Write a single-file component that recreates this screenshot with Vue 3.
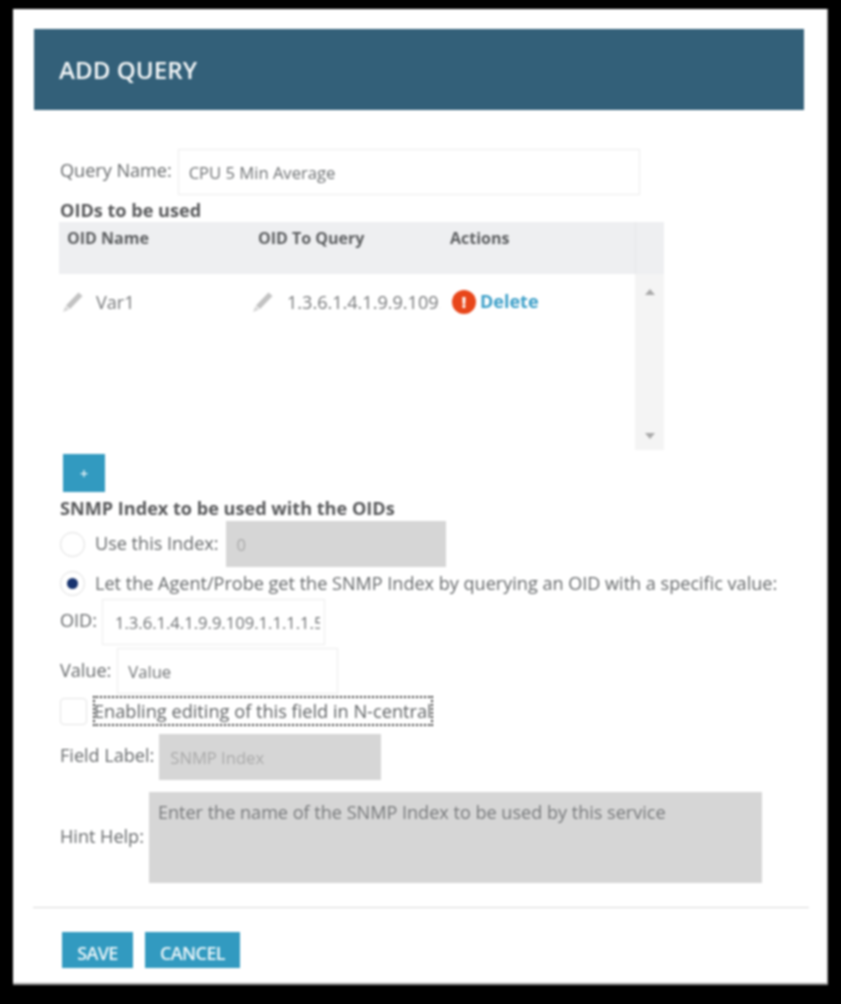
<template>
  <div class="page">
    <div class="panel">
      <header class="head">ADD QUERY</header>

      <div class="form">
        <div class="row nameRow">
          <span class="lbl">Query Name:</span>
          <div class="field nameField"><span class="fieldText">CPU 5 Min Average</span></div>
        </div>

        <h3 class="sub oidsSub">OIDs to be used</h3>
        <div class="table">
          <div class="tableMain">
            <div class="thead">
              <span class="colA">OID Name</span>
              <span class="colB">OID To Query</span>
              <span class="colC">Actions</span>
            </div>
            <div class="tbody">
              <div class="cell colA">
                <svg class="pencil" viewBox="0 0 22 22"><path d="M16.5 1.5l4 3.5L8 18l-4-3.5z" fill="#c2c2c2" /><path d="M3.4 15.3l3.7 3.3L1 21z" fill="#d4d4d4" /></svg>
                <span>{{ row.name }}</span>
              </div>
              <div class="cell colB">
                <svg class="pencil" viewBox="0 0 22 22"><path d="M16.5 1.5l4 3.5L8 18l-4-3.5z" fill="#c2c2c2" /><path d="M3.4 15.3l3.7 3.3L1 21z" fill="#d4d4d4" /></svg>
                <span class="oidText">{{ row.oid }}</span>
              </div>
              <div class="cell colC">
                <span class="warn">!</span>
                <a class="del">Delete</a>
              </div>
            </div>
          </div>
          <div class="scroll">
            <div class="scrollHead"></div>
            <div class="scrollTrack">
              <span class="arrUp"></span>
              <span class="arrDown"></span>
            </div>
          </div>
        </div>
        <button class="btn addBtn">+</button>

        <h3 class="sub snmpSub">SNMP Index to be used with the OIDs</h3>
        <div class="row useRow">
          <span class="radio"></span>
          <span class="lbl optText">Use this Index:</span>
          <div class="field off indexField"><span class="fieldText">0</span></div>
        </div>
        <div class="row letRow">
          <span class="radio on"></span>
          <span class="lbl optText">Let the Agent/Probe get the SNMP Index by querying an OID with a specific value:</span>
        </div>
        <div class="row oidRow">
          <span class="lbl">OID:</span>
          <div class="field oidField"><span class="fieldText">{{ row.oid }}</span></div>
        </div>
        <div class="row valueRow">
          <span class="lbl">Value:</span>
          <div class="field valueField"><span class="fieldText">Value</span></div>
        </div>
        <div class="row checkRow">
          <span class="check"></span>
          <span class="lbl focusText">Enabling editing of this field in N-central</span>
        </div>
        <div class="row labelRow">
          <span class="lbl">Field Label:</span>
          <div class="field off labelField"><span class="fieldText">SNMP Index</span></div>
        </div>
        <div class="row hintRow">
          <span class="lbl">Hint Help:</span>
          <div class="hintField">Enter the name of the SNMP Index to be used by this service</div>
        </div>
      </div>

      <div class="foot">
        <button class="btn saveBtn">SAVE</button>
        <button class="btn cancelBtn">CANCEL</button>
      </div>
    </div>
  </div>
</template>

<script setup>
const row = { name: "Var1", oid: "1.3.6.1.4.1.9.9.109.1.1.1.1.5" };
</script>

<style>
html, body { margin: 0; background: #000; }
</style>

<style scoped>
.page {
  width: 841px;
  height: 1004px;
  overflow: hidden;
  background: #000;
  padding: 9px 0 0 13px;
  box-sizing: border-box;
  font-family: "Open Sans", "Liberation Sans", sans-serif;
  font-size: 18.07px;
  color: #66696b;
}

.panel {
  width: 815px;
  height: 976px;
  box-sizing: border-box;
  background: #fff;
  padding: 20px 0 0 21px;
  box-shadow: inset -2px -3px 1px -1px #9a9a9a;
  filter: blur(0.9px);
}

.head {
  width: 770px;
  height: 81px;
  box-sizing: border-box;
  background: #336079;
  color: #f4f7f8;
  font-size: 24.2px;
  font-weight: 600;
  line-height: 81px;
  padding-left: 25px;
}

.form { padding: 39px 0 0 26px; }

.row { display: flex; align-items: center; }
.lbl { white-space: nowrap; }

.field {
  height: 46px;
  box-sizing: border-box;
  border: 1px solid #ececec;
  background: #fff;
  font-size: 16.6px;
  line-height: 44px;
  padding: 1px 10px 0;
  white-space: nowrap;
  color: #6f7274;
}
.fieldText { display: block; overflow: hidden; }
.field.off {
  background: #d6d6d6;
  border-color: #d6d6d6;
  color: #a9a9a9;
}

.nameRow { height: 46px; }
.nameRow .lbl { margin-top: -4px; }
.nameField { width: 462px; margin-left: 6px; }

.sub {
  margin: 0;
  font-size: 18.1px;
  font-weight: 700;
  color: #58595b;
  white-space: nowrap;
}
.oidsSub { height: 27px; line-height: 31px; }

.table {
  display: flex;
  width: 605px;
  height: 228px;
  margin-left: -1px;
}
.tableMain { flex: 1; min-width: 0; }
.thead {
  display: flex;
  height: 52px;
  background: #eeeff1;
  font-size: 16px;
  font-weight: 700;
  color: #5d5f61;
  line-height: 32px;
}
.thead span { padding-left: 8px; box-sizing: border-box; }
.colA { width: 191px; }
.colB { width: 192px; }
.colC { flex: 1; }
.tbody { display: flex; padding-top: 15px; }
.cell {
  display: flex;
  align-items: center;
  height: 26px;
  box-sizing: border-box;
  color: #77797b;
  overflow: hidden;
  white-space: nowrap;
}
.cell.colA { padding-left: 3px; }
.cell.colB { padding: 0 2px 0 2px; }
.cell.colC { padding-left: 10px; overflow: visible; }
.pencil { width: 22px; height: 22px; flex: none; margin-right: 12px; }
.cell.colB .pencil { margin-right: 13px; }
.oidText { overflow: hidden; }
.warn {
  width: 24px;
  height: 24px;
  flex: none;
  border-radius: 50%;
  background: #e8461a;
  color: #fff;
  font-size: 15px;
  font-weight: 800;
  line-height: 24px;
  text-align: center;
  margin-right: 4px;
}
.del {
  font-size: 18px;
  font-weight: 700;
  color: #3c9fc8;
  margin-top: -2px;
}

.scroll { width: 29px; flex: none; display: flex; flex-direction: column; }
.scrollHead { height: 52px; background: #eeeff1; border-left: 1px solid #e6e7e9; }
.scrollTrack {
  flex: 1;
  background: #f4f4f4;
  display: flex;
  flex-direction: column;
  justify-content: space-between;
  align-items: center;
  padding: 15px 0 11px;
}
.arrUp, .arrDown {
  width: 0;
  height: 0;
  border-left: 5px solid transparent;
  border-right: 5px solid transparent;
}
.arrUp { border-bottom: 6px solid #a9a9a9; }
.arrDown { border-top: 6px solid #a9a9a9; }

.btn {
  display: block;
  border: 0;
  padding: 0;
  background: #329ac0;
  color: #eef7fa;
  font-family: inherit;
  font-size: 18px;
  font-weight: 600;
  letter-spacing: -0.6px;
}
.addBtn {
  width: 42px;
  height: 38px;
  margin: 4px 0 0 3px;
  font-size: 14px;
  letter-spacing: 0;
}

.snmpSub { height: 29px; line-height: 33px; }

.useRow { height: 46px; }
.radio {
  width: 25px;
  height: 25px;
  flex: none;
  box-sizing: border-box;
  border: 1px solid #dedede;
  border-radius: 50%;
  background: #fff;
  display: flex;
  align-items: center;
  justify-content: center;
}
.radio.on::before {
  content: "";
  width: 11px;
  height: 11px;
  border-radius: 50%;
  background: #17336f;
}
.optText { margin-left: 10px; }
.useRow .optText { margin-top: -2px; }
.indexField { width: 220px; margin-left: 7px; }

.letRow { height: 32px; }
.letRow .radio { margin-top: 1px; }

.oidRow { height: 46px; }
.oidRow .lbl { margin-top: -4px; }
.oidField { width: 223px; margin-left: 5px; padding: 1px 4px 0 12px; }

.valueRow { height: 46px; margin-top: 3px; }
.valueRow .lbl { margin-top: -3px; }
.valueField { width: 221px; margin-left: 6px; }

.checkRow { height: 32px; margin-top: 1px; }
.check {
  width: 27px;
  height: 27px;
  flex: none;
  box-sizing: border-box;
  border: 1px solid #e4e4e4;
  border-radius: 4px;
  background: #fff;
}
.focusText {
  margin: -1px 0 0 7px;
  outline: 2px dotted #333;
  outline-offset: -1px;
  font-size: 18.2px;
  line-height: 28px;
  color: #606365;
}

.labelRow { height: 46px; margin-top: 7px; }
.labelRow .lbl { margin-top: -4px; }
.labelField { width: 222px; margin-left: 5px; }

.hintRow { height: 91px; margin-top: 12px; }
.hintRow .lbl { margin-top: -3px; }
.hintField {
  width: 613px;
  height: 91px;
  box-sizing: border-box;
  background: #d6d6d6;
  margin-left: 5px;
  padding: 8px 9px;
  color: #77797b;
  line-height: 24px;
}

.foot {
  display: flex;
  gap: 12px;
  width: 776px;
  height: 61px;
  box-sizing: border-box;
  margin: 24px 0 0 -1px;
  border-top: 1px solid #d9d9d9;
  padding: 24px 0 0 29px;
}
.saveBtn, .cancelBtn { height: 36px; padding-top: 5px; }
.saveBtn { width: 71px; }
.cancelBtn { width: 95px; }
</style>
